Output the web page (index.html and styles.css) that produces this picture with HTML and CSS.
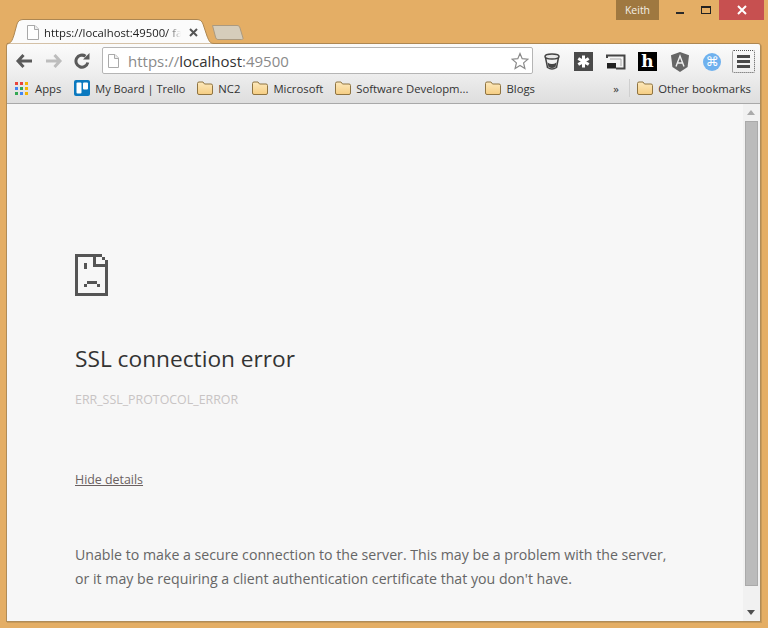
FILE: index.html
```html
<!DOCTYPE html>
<html lang="en">
<head>
<meta charset="utf-8">
<title>SSL connection error</title>
<link rel="stylesheet" href="styles.css">
</head>
<body>
<div class="titlebar">
  <div class="user">Keith</div>
  <div class="winbtn"><svg width="12" height="12" viewBox="0 0 12 12" shape-rendering="crispEdges"><rect x="2" y="8" width="8" height="2" fill="#2a2a2a"/></svg></div>
  <div class="winbtn"><svg width="12" height="12" viewBox="0 0 12 12" shape-rendering="crispEdges"><rect x="1.500" y="2.500" width="9" height="7" fill="none" stroke="#222" stroke-width="1"/><rect x="1" y="2" width="10" height="2" fill="#222"/></svg></div>
  <div class="winclose"><svg width="12" height="12" viewBox="0 0 12 12"><path d="M2 2l8 8M10 2l-8 8" stroke="#fff" stroke-width="2"/></svg></div>
</div>
<div class="tabstrip">
  <div class="tab">
    <svg class="tabshape" width="207" height="25" viewBox="0 0 207 25"><path d="M0 24.500C4 24.500 5 22 7 16L10 5C11 2 13 .5 16 .5H190C193 .5 195 2 196 5L200 17C202 22 203 24.500 207 24.500V25H0Z" fill="#fbfbfb" stroke="#ad8752" stroke-width="1"/></svg>
    <svg class="pageicon" width="12" height="15" viewBox="0 0 12 15"><path d="M.5.5H8L11.500 4V14.500H.5Z" fill="#fff" stroke="#a8a8a8"/><path d="M7.500.5V4.500H11.500" fill="#eee" stroke="#a8a8a8"/></svg>
    <span class="tabtitle">https://localhost:49500/ fa</span>
    <svg class="tabclose" width="9" height="9" viewBox="0 0 9 9"><path d="M1 1l7 7M8 1L1 8" stroke="#555" stroke-width="2"/></svg>
  </div>
  <svg class="newtab" width="32" height="15" viewBox="0 0 32 15"><path d="M.5.500H25C27 .500 27.500 1.500 28 3L31 13C31.300 14 30.500 14.500 29.500 14.500H6C4.500 14.500 4 13.500 3.500 12Z" fill="#d6cdbb" stroke="#ab9a80"/></svg>
</div>
<div class="window">
  <div class="toolbar">
    <div class="navrow">
      <svg class="nav back" width="18" height="16" viewBox="0 0 18 16"><path d="M8.500 2L3 8 8.500 14M3.500 8H17" fill="none" stroke="#5a5a5a" stroke-width="3"/></svg>
      <svg class="nav" width="18" height="16" viewBox="0 0 18 16"><path d="M9.500 2L15 8 9.500 14M14.500 8H1" fill="none" stroke="#bdbdbd" stroke-width="3"/></svg>
      <svg class="nav" width="16" height="16" viewBox="0 0 16 16"><path d="M13.800 9.500A6 6 0 1 1 11.500 3.300" fill="none" stroke="#5a5a5a" stroke-width="3"/><path d="M9 6.500H15.500V0Z" fill="#5a5a5a"/></svg>
      <div class="omnibox">
        <svg width="11" height="14" viewBox="0 0 11 14"><path d="M.5.5H7L10.500 4V13.500H.5Z" fill="#fff" stroke="#aaa"/><path d="M6.500.5V4.500H10.500" fill="#eee" stroke="#aaa"/></svg>
        <span class="url">https://<b>localhost</b>:49500</span>
        <svg class="star" width="18" height="18" viewBox="0 0 18 18"><path d="M9 1.500L11.200 6.700 16.900 7.200 12.600 10.900 13.900 16.500 9 13.500 4.100 16.500 5.400 10.900 1.100 7.200 6.800 6.700Z" fill="#fff" stroke="#8a8a8a" stroke-width="1.200"/></svg>
      </div>
      <div class="exts">
        <svg width="18" height="18" viewBox="0 0 18 18"><path d="M2.500 4.500L4.500 14.500Q9 17.500 13.500 14.500L15.500 4.500" fill="#f2f2f2" stroke="#444" stroke-width="1.500"/><ellipse cx="9" cy="3.500" rx="7" ry="2.500" fill="#e8e8e8" stroke="#444" stroke-width="1.500"/><path d="M4.500 9.500Q9 12.500 13.500 9.500L12.500 14Q9 16 5.500 14Z" fill="#444"/></svg>
        <svg width="19" height="19" viewBox="0 0 19 19"><rect width="19" height="19" fill="#4a4a4a"/><path d="M9.500 3.500V15.500M4.300 6.500L14.700 12.500M14.700 6.500L4.300 12.500" stroke="#fff" stroke-width="3"/></svg>
        <svg width="20" height="16" viewBox="0 0 20 16"><path d="M1 4V1.500H18.500V14.500H10" fill="none" stroke="#444" stroke-width="2"/><rect x="1" y="9" width="9" height="5.500" fill="#222"/><path d="M4 5H15V12" fill="none" stroke="#aaa" stroke-width="1"/></svg>
        <div class="hn">h</div>
        <svg class="ng" width="18" height="20" viewBox="0 0 18 20"><path d="M9 0L18 3.200 16.600 15 9 20 1.400 15 0 3.200Z" fill="#666"/><path d="M5 14.500L9 4 13 14.500M6.300 11H11.700" fill="none" stroke="#eee" stroke-width="1.400"/></svg>
        <div class="cmd">⌘</div>
        <div class="menu"><span></span><span></span><span></span></div>
      </div>
    </div>
    <div class="bookmarks">
      <div class="bm apps"><svg width="13" height="13" viewBox="0 0 13 13" shape-rendering="crispEdges"><rect width="3" height="3" fill="#e8453c"/><rect x="5" width="3" height="3" fill="#e8453c"/><rect x="10" width="3" height="3" fill="#f4b400"/><rect y="5" width="3" height="3" fill="#4285f4"/><rect x="5" y="5" width="3" height="3" fill="#34a853"/><rect x="10" y="5" width="3" height="3" fill="#f4b400"/><rect y="10" width="3" height="3" fill="#34a853"/><rect x="5" y="10" width="3" height="3" fill="#4285f4"/><rect x="10" y="10" width="3" height="3" fill="#f4b400"/></svg>Apps</div>
      <div class="bm"><svg width="16" height="16" viewBox="0 0 16 16"><rect width="16" height="16" rx="2" fill="#0b79bf"/><rect x="2.500" y="2.500" width="5" height="11" rx="1" fill="#fff"/><rect x="9" y="2.500" width="5" height="7" rx="1" fill="#fff"/></svg><span class="trello">My Board | Trello</span></div>
      <div class="bm"><svg class="folder" width="16" height="14" viewBox="0 0 16 14"><use href="#folder"/></svg>NC2</div>
      <div class="bm"><svg class="folder" width="16" height="14" viewBox="0 0 16 14"><use href="#folder"/></svg>Microsoft</div>
      <div class="bm wide"><svg class="folder" width="16" height="14" viewBox="0 0 16 14"><use href="#folder"/></svg>Software Developm...</div>
      <div class="bm"><svg class="folder" width="16" height="14" viewBox="0 0 16 14"><use href="#folder"/></svg>Blogs</div>
      <div class="more">»</div>
      <div class="sep"></div>
      <div class="bm last"><svg class="folder" width="16" height="14" viewBox="0 0 16 14"><use href="#folder"/></svg>Other bookmarks</div>
    </div>
  </div>
  <div class="content">
    <main class="page">
      <svg class="sad" width="33" height="42" viewBox="0 0 33 42" shape-rendering="crispEdges" fill="#555">
        <rect width="27" height="3"/><rect width="3" height="42"/><rect y="39" width="33" height="3"/><rect x="30" y="6" width="3" height="36"/>
        <rect x="18" width="3" height="13"/><rect x="18" y="10" width="15" height="3"/><rect x="27" y="3" width="3" height="3"/>
        <rect x="9" y="9" width="3" height="6"/><rect x="12" y="27" width="10" height="3"/><rect x="9" y="30" width="3" height="3"/><rect x="22" y="30" width="3" height="3"/>
      </svg>
      <h1>SSL connection error</h1>
      <p class="code">ERR_SSL_PROTOCOL_ERROR</p>
      <a class="details" href="#">Hide details</a>
      <p class="desc">Unable to make a secure connection to the server. This may be a problem with the server,<br>or it may be requiring a client authentication certificate that you don't have.</p>
    </main>
    <div class="scrollbar">
      <div class="arrow up"></div>
      <div class="thumb"></div>
      <div class="arrow down"></div>
    </div>
  </div>
</div>
<svg class="defs" width="0" height="0"><defs><linearGradient id="fg" x1="0" y1="0" x2="0" y2="1"><stop offset="0" stop-color="#fde9bd"/><stop offset="1" stop-color="#f5cd82"/></linearGradient><g id="folder"><path d="M.5 2.500Q.5 1 2 1H6L7.500 3H14Q15.500 3 15.500 4.500V12Q15.500 13.500 14 13.500H2Q.5 13.500 .5 12Z" fill="url(#fg)" stroke="#8f7441"/></g></defs></svg>
</body>
</html>
```
FILE: styles.css
```css
* { box-sizing: border-box; }
html, body { height: 100%; }
body {
  margin: 0;
  height: 628px;
  overflow: hidden;
  background: #e4ae65;
  display: flex;
  flex-direction: column;
  font-family: "Open Sans", "Liberation Sans", sans-serif;
}
.titlebar {
  height: 20px;
  flex: none;
  display: flex;
  justify-content: flex-end;
  padding-right: 4px;
}
.user {
  width: 43px;
  background: #9f7840;
  color: #f4efe6;
  font-size: 10.500px;
  line-height: 20px;
  text-align: center;
  margin-right: 7px;
}
.winbtn {
  width: 27px;
  height: 20px;
  display: flex;
  align-items: center;
  justify-content: center;
}
.winbtn + .winbtn { width: 26px; }
.winclose {
  width: 45px;
  height: 20px;
  background: #c75050;
  display: flex;
  align-items: center;
  justify-content: center;
}
.tabstrip {
  height: 23px;
  flex: none;
  display: flex;
  align-items: flex-start;
  padding-left: 7px;
}
.tab {
  position: relative;
  width: 207px;
  height: 24px;
  margin-top: -1px;
  z-index: 2;
  display: flex;
  align-items: center;
  padding: 2px 0 0 20px;
  flex: none;
}
.tabshape { position: absolute; left: 0; top: 0; }
.pageicon { position: relative; flex: none; }
.tabtitle {
  position: relative;
  width: 137px;
  margin-left: 5px;
  overflow: hidden;
  white-space: nowrap;
  font-size: 11.300px;
  color: #222;
  -webkit-mask-image: linear-gradient(90deg, #000 90%, transparent 100%);
  mask-image: linear-gradient(90deg, #000 90%, transparent 100%);
}
.tabclose { position: relative; margin-left: 8px; flex: none; }
.newtab { margin: 5px 0 0 -2px; flex: none; }
.window {
  flex: 1;
  margin: 0 7px 6px 6px;
  min-height: 0;
  display: flex;
  flex-direction: column;
  border: 1px solid #b08c58;
  border-top-color: #ad8752;
  border-radius: 3px 3px 0 0;
  box-shadow: 1px 1px 0 #c99b5a;
  overflow: hidden;
}
.toolbar {
  height: 60px;
  flex: none;
  background: linear-gradient(#fbfbfb, #f1f1f1 40%, #dedede);
  border-bottom: 1px solid #a9a9a9;
}
.navrow {
  height: 33px;
  display: flex;
  align-items: center;
  padding-left: 8px;
}
.nav { flex: none; margin-right: 11px; }
.nav.back { margin-right: 12px; }
.omnibox {
  width: 431px;
  height: 27px;
  margin-left: 1px;
  background: #fff;
  border: 1px solid #b5b5b5;
  border-radius: 2px;
  display: flex;
  align-items: center;
  padding: 0 3px 0 5px;
  flex: none;
}
.url {
  flex: 1;
  margin-left: 9px;
  font-size: 15px;
  color: #8a8a8a;
}
.url b { font-weight: 400; color: #333; }
.exts {
  display: flex;
  align-items: center;
  gap: 13px;
  margin: 2px 0 0 10px;
}
.hn {
  width: 19px;
  height: 19px;
  margin-left: -1px;
  background: #000;
  color: #fff;
  font: 700 17px/19px "DejaVu Serif", serif;
  text-align: center;
}
.ng { margin-left: 1px; }
.cmd {
  width: 18px;
  height: 18px;
  margin-left: 1px;
  border-radius: 50%;
  background: #6fb1ee;
  color: #fff;
  font: 13px/18px "DejaVu Sans", sans-serif;
  text-align: center;
}
.menu {
  width: 23px;
  height: 23px;
  margin-left: -2px;
  border: 1px dotted #555;
  border-radius: 2px;
  display: flex;
  flex-direction: column;
  justify-content: center;
  gap: 2px;
  padding: 0 4px;
}
.menu span { height: 3px; background: #4a4a4a; }
.bookmarks {
  height: 22px;
  display: flex;
  align-items: center;
  padding-left: 8px;
  font-size: 11.300px;
  color: #333;
}
.bm {
  display: flex;
  align-items: center;
  gap: 5px;
  white-space: nowrap;
  margin-right: 12px;
}
.bm.apps { gap: 7px; margin-right: 13px; }
.trello { font-size: 11px; }
.bm.wide { margin-right: 17px; }
.more { margin-left: auto; width: 16px; }
.sep { width: 1px; height: 18px; background: #cfcfcf; margin-right: 7px; }
.bm.last { margin-right: 9px; }
.content {
  flex: 1;
  min-height: 0;
  display: flex;
  background: #f7f7f7;
}
.page { flex: 1; padding: 150px 0 0 68px; }
.sad { display: block; }
h1 {
  margin: 48px 0 0;
  font-size: 22.700px;
  line-height: 30px;
  font-weight: 400;
  color: #333;
}
.code {
  margin: 18px 0 0;
  font-size: 12.400px;
  line-height: 16px;
  color: #c8c4c4;
}
.details {
  display: inline-block;
  margin-top: 64px;
  font-size: 12.400px;
  line-height: 16px;
  color: #6a6060;
}
.desc {
  margin: 54px 0 0;
  font-size: 14.170px;
  line-height: 24px;
  color: #666;
  white-space: nowrap;
}
.scrollbar {
  width: 17px;
  flex: none;
  background: #f1f1f1;
  display: flex;
  flex-direction: column;
  align-items: center;
}
.arrow { height: 17px; width: 100%; position: relative; flex: none; }
.arrow::after {
  content: "";
  position: absolute;
  left: 4px;
  border-left: 4px solid transparent;
  border-right: 4px solid transparent;
}
.arrow.up::after { top: 6px; border-bottom: 5px solid #aaa; }
.arrow.down::after { top: 6px; border-top: 5px solid #505050; }
.thumb { width: 13px; flex: 1; background: #bbb; border: 1px solid #aaa; margin-bottom: 18px; }
.defs { position: absolute; }
```
